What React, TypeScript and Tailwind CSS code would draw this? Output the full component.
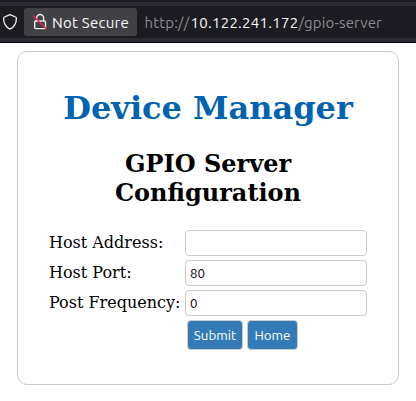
import React from "react";

const uiFont = "font-['Ubuntu','Noto_Sans',sans-serif]";

function AddressBar() {
  return (
    <header className={`flex h-[43px] flex-col border-b border-[#08080c] bg-[#2b2a33] ${uiFont}`}>
      <div className="h-[2px] bg-[#1c1b22]" />
      <div className="mt-[4px] flex h-[32px] items-center bg-[#1c1b22] text-[15px] leading-[20px] whitespace-nowrap">
        <svg className="ml-[2px] h-[18px] w-[16px] shrink-0" viewBox="0 0 16 18" fill="none" stroke="#f0f0f4" strokeWidth="1.3" strokeLinejoin="round">
          <path d="M8 1.7 L13.6 4 Q14.4 4.3 14.4 5.2 C14.4 10.2 12.2 14 8 16.2 C3.8 14 1.6 10.2 1.6 5.2 Q1.6 4.3 2.4 4 Z" />
        </svg>
        <div className="ml-[6px] flex h-[28px] w-[113px] shrink-0 items-center rounded-[3px] bg-[#414045]">
          <svg className="ml-[8px] h-[18px] w-[16px] shrink-0" viewBox="0 0 16 18" fill="none">
            <path d="M4.6 8 V5 A3.5 3.5 0 0 1 11.6 5 V8" stroke="#f0f0f4" strokeWidth="1.4" />
            <rect x="2.7" y="8" width="10.8" height="7.6" rx="1" stroke="#f0f0f4" strokeWidth="1.4" />
            <path d="M1 2.5 L14.8 16.2" stroke="#e22850" strokeWidth="1.4" />
          </svg>
          <span className="relative top-px ml-[4px] tracking-[0.25px] text-[#fbfbfe]">Not Secure</span>
        </div>
        <div className="relative top-px ml-[7.5px] flex text-[#8b8a91]">
          <span className="w-[46px] tracking-[0.15px]">http://</span>
          <span className="w-[108px] tracking-[0.27px] text-[#fbfbfe]">10.122.241.172</span>
          <span className="tracking-[0.15px]">/gpio-server</span>
        </div>
      </div>
    </header>
  );
}

const inputClass =
  "block h-[26px] w-[182px] rounded-[4px] border border-[#cccccc] bg-white px-[4px] font-['Ubuntu','Noto_Sans',sans-serif] text-[13.3333px] text-black outline-none";
const buttonClass =
  "h-[30px] rounded-[4px] border border-[#cccccc] bg-[#337ab7] text-center font-['Ubuntu','Noto_Sans',sans-serif] text-[13.3333px] leading-[29px] text-white";

function Field({ label, value }: { label: string; value: string }) {
  return (
    <div className="flex h-[26px] items-center">
      <label className="w-[136px] shrink-0 pb-[2px] whitespace-nowrap">{label}</label>
      <input className={inputClass} defaultValue={value} />
    </div>
  );
}

export default function App() {
  return (
    <div className="h-[401px] w-[416px] overflow-hidden bg-white font-['DejaVu_Serif',serif] text-black">
      <AddressBar />
      <main className="mt-[8px] ml-[17px] h-[334px] w-[382px] rounded-[10px] border border-[#cccccc] px-[31px]">
        <h1 className="mt-[37px] text-center text-[32px] leading-[38px] font-bold whitespace-nowrap text-[#0062b1]">Device Manager</h1>
        <h2 className="mt-[22px] text-center text-[24px] leading-[29px] font-bold">
          GPIO Server
          <br />
          Configuration
        </h2>
        <form className="mt-[23px] flex flex-col gap-[4px] text-[16px] leading-[19px]" onSubmit={(e) => e.preventDefault()}>
          <Field label="Host Address:" value="" />
          <Field label="Host Port:" value="80" />
          <Field label="Post Frequency:" value="0" />
          <div className="ml-[138px] flex gap-[4px]">
            <button type="submit" className={`w-[56px] ${buttonClass}`}>Submit</button>
            <button type="button" className={`w-[51px] ${buttonClass}`}>Home</button>
          </div>
        </form>
      </main>
    </div>
  );
}
